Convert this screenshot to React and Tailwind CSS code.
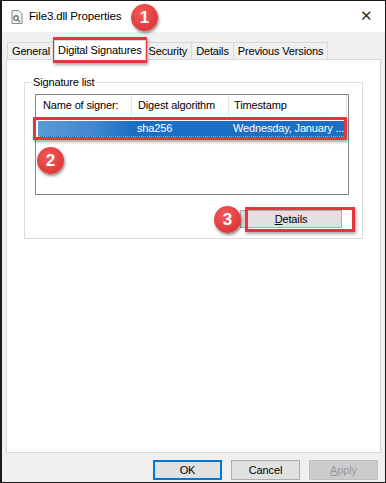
import { useState } from "react";

const tabs = ["General", "Digital Signatures", "Security", "Details", "Previous Versions"];

const Badge = ({ n, className }) => (
  <div
    className={`absolute w-[27px] h-[27px] rounded-full flex items-center justify-center text-white text-[17px] font-bold bg-[radial-gradient(circle_at_40%_35%,#f25a5a,#d62b2b)] shadow-[1px_2px_3px_rgba(0,0,0,0.45)] ${className}`}
  >
    {n}
  </div>
);

const FileIcon = () => (
  <svg width="12" height="14" viewBox="0 0 12 14">
    <path d="M1 0.5h7l3 3v10H1z" fill="#f4f4f4" stroke="#8a8a8a" />
    <circle cx="5" cy="8" r="2.2" fill="none" stroke="#7a7a7a" strokeWidth="1.4" />
    <path d="M6.5 9.5l2.5 2.5" stroke="#7a7a7a" strokeWidth="1.4" />
  </svg>
);

const App = () => {
  const [active, setActive] = useState(1);

  return (
    <div className="relative w-[386px] h-[483px] bg-[#f0f0f0] border border-[#1a1a1a] border-l-2 font-['Liberation_Sans',Arial,sans-serif] text-[11px] tracking-[-0.15px] text-black overflow-hidden">
      {/* title bar */}
      <div className="h-[31px] bg-white flex items-center pl-[9px] pr-[12px]">
        <FileIcon />
        <span className="ml-[6px] text-[11.5px]">File3.dll Properties</span>
        <span className="ml-auto text-[15px] text-[#333] font-light">✕</span>
      </div>

      <div className="px-[4px] pt-[10px]">
        {/* tabs */}
        <div className="flex items-end h-[17px] pl-[1px]">
          {tabs.map((t, i) =>
            i === active ? (
              <button
                key={t}
                onClick={() => setActive(i)}
                className="h-[20px] -mb-px px-[3px] bg-white border border-[#d9d9d9] border-b-white relative z-10 -mx-[1px]"
              >
                {t}
              </button>
            ) : (
              <button
                key={t}
                onClick={() => setActive(i)}
                className="h-[17px] px-[4px] bg-[#f0f0f0] border border-[#d9d9d9] border-b-0 -ml-px first:ml-0"
              >
                {t}
              </button>
            )
          )}
        </div>

        {/* panel */}
        <div className="h-[394px] bg-white border border-[#d9d9d9] pt-[22px] px-[17px]">
          <div className="relative border border-[#dcdcdc] h-[157px] px-[10px] pt-[11px]">
            <span className="absolute -top-[8px] left-[7px] bg-white px-[1px] leading-[14px]">Signature list</span>
            <div className="border border-[#828790] h-[101px] w-[314px]">
              <div className="flex h-[21px] items-center">
                <div className="w-[96px] h-full flex items-center pl-[7px] border-r border-[#e5e5e5]">Name of signer:</div>
                <div className="w-[97px] h-full flex items-center pl-[6px] border-r border-[#e5e5e5]">Digest algorithm</div>
                <div className="w-[118px] h-full flex items-center pl-[5px] border-r border-[#e5e5e5]">Timestamp</div>
              </div>
              <div className="mt-[5px] mx-[2px] h-[16px] flex items-center bg-[#1a6fc4] text-white border-b border-dotted border-[#f0a030]">
                <div className="w-[94px] h-full bg-[linear-gradient(90deg,#5c9ad8,#3f87d0_60%,#1a6fc4)]" />
                <div className="w-[97px] pl-[5px]">sha256</div>
                <div className="w-[114px] pl-[4px] whitespace-nowrap">Wednesday, January ...</div>
              </div>
            </div>
            <div className="flex justify-end mt-[15px] pr-[10px]">
              <button className="w-[102px] h-[18px] bg-[#e1e1e1] border border-[#adadad] leading-none">
                <span className="underline">D</span>etails
              </button>
            </div>
          </div>
        </div>

        {/* bottom buttons */}
        <div className="flex justify-end gap-[9px] pr-[3px] mt-[7px]">
          <button className="w-[69px] h-[20px] bg-[#e1e1e1] border-2 border-[#0078d7]">OK</button>
          <button className="w-[69px] h-[20px] bg-[#e1e1e1] border border-[#adadad]">Cancel</button>
          <button className="w-[69px] h-[20px] bg-[#cccccc] border border-[#bfbfbf] text-[#9a9a9a]">
            <span className="underline">A</span>pply
          </button>
        </div>
      </div>

      {/* annotations */}
      <div className="absolute left-[51px] top-[36px] w-[94px] h-[26px] border-[3px] border-[#e8353d] shadow-[1px_2px_3px_rgba(0,0,0,0.35)] pointer-events-none" />
      <div className="absolute left-[31px] top-[116px] w-[314px] h-[23px] border-[3px] border-[#e8353d] shadow-[1px_2px_3px_rgba(0,0,0,0.35)] pointer-events-none" />
      <div className="absolute left-[243px] top-[206px] w-[110px] h-[25px] border-[3px] border-[#e8353d] shadow-[1px_2px_3px_rgba(0,0,0,0.35)] pointer-events-none" />
      <Badge n="1" className="left-[129px] top-[3px]" />
      <Badge n="2" className="left-[35px] top-[146px]" />
      <Badge n="3" className="left-[212px] top-[205px]" />
    </div>
  );
};

export default App;
